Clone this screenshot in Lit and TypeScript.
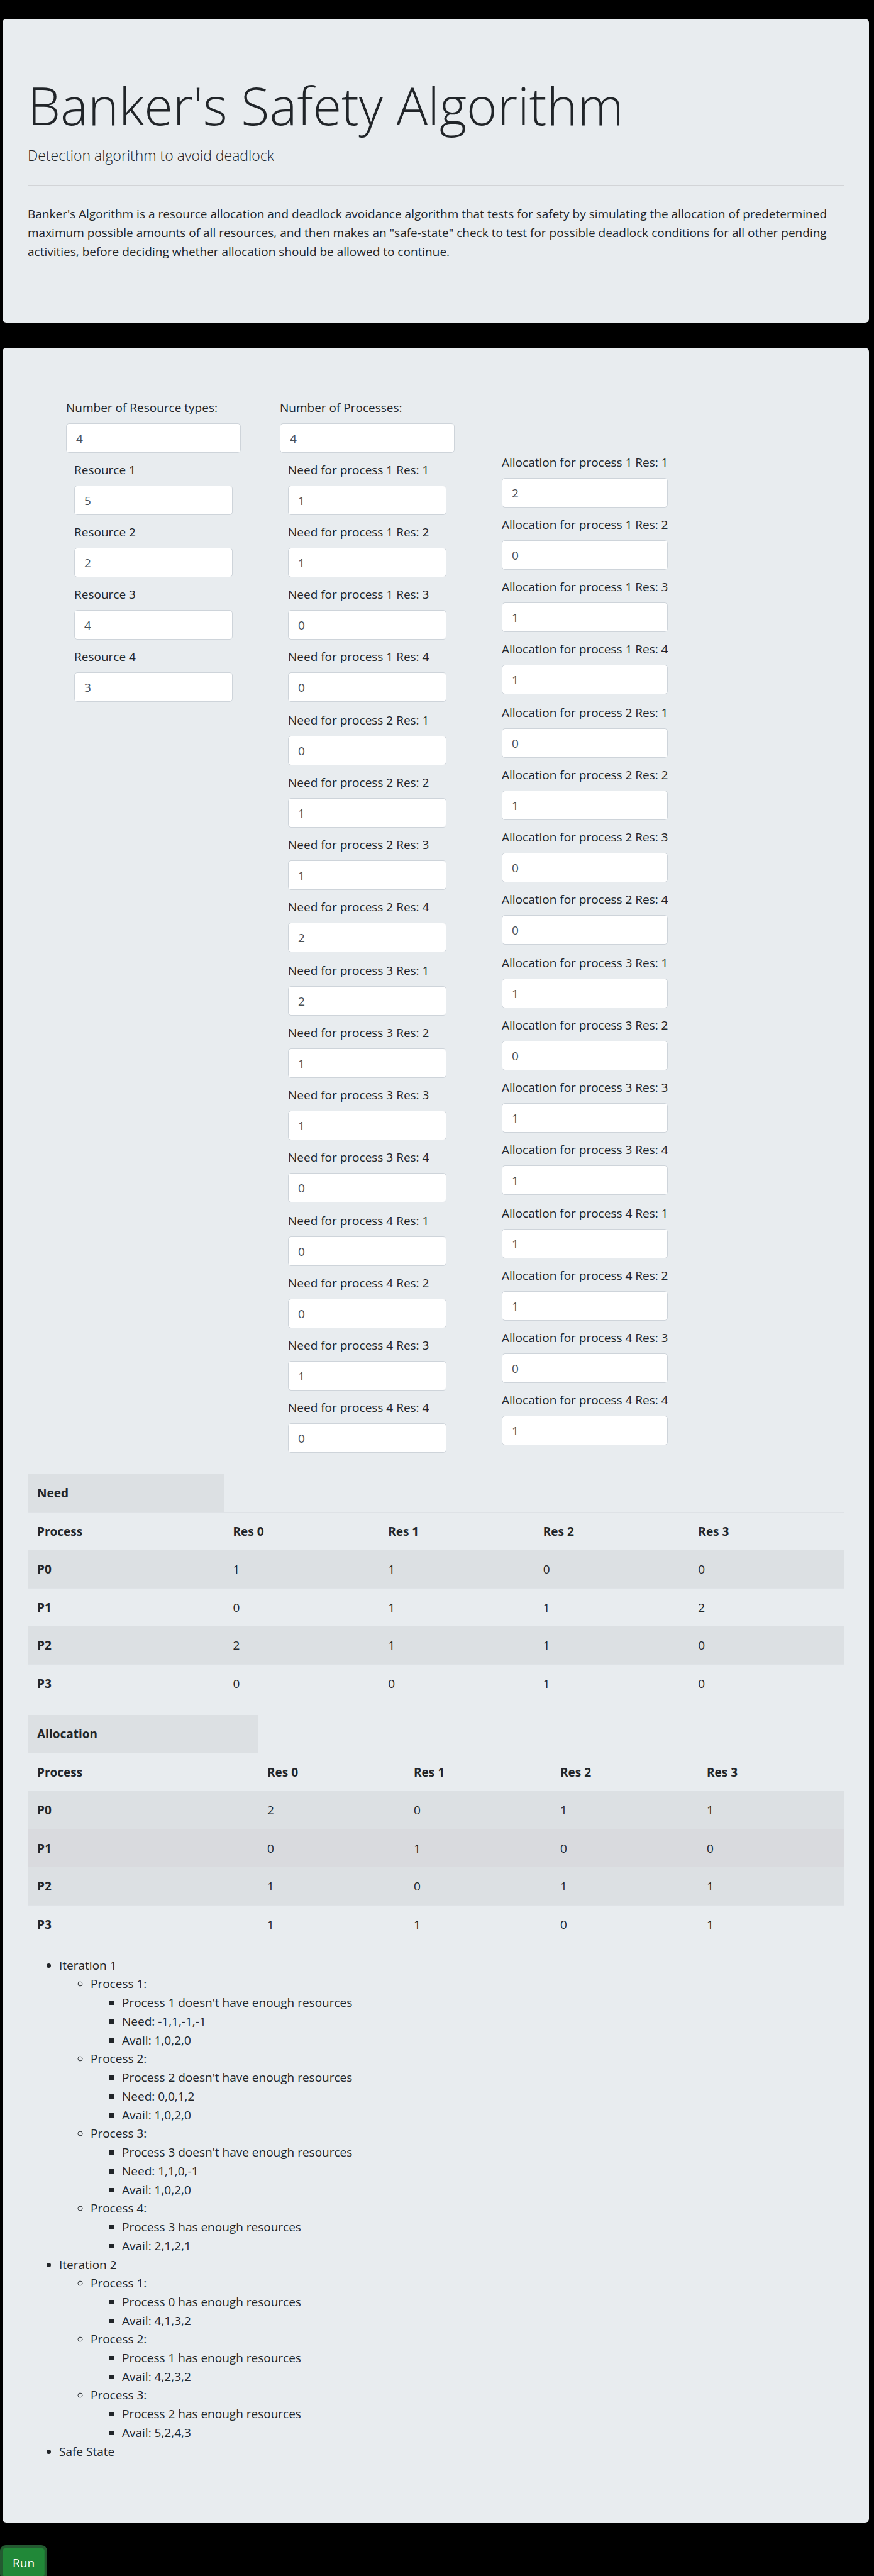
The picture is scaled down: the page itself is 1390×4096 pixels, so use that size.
import { LitElement, html, css } from "lit";
import { customElement, property, state } from "lit/decorators.js";

type Matrix = number[][];
interface Step {
  title: string;
  notes: string[];
}
interface Iteration {
  title: string;
  steps: Step[];
}

const log: Iteration[] = [
  {
    title: "Iteration 1",
    steps: [
      { title: "Process 1:", notes: ["Process 1 doesn't have enough resources", "Need: -1,1,-1,-1", "Avail: 1,0,2,0"] },
      { title: "Process 2:", notes: ["Process 2 doesn't have enough resources", "Need: 0,0,1,2", "Avail: 1,0,2,0"] },
      { title: "Process 3:", notes: ["Process 3 doesn't have enough resources", "Need: 1,1,0,-1", "Avail: 1,0,2,0"] },
      { title: "Process 4:", notes: ["Process 3 has enough resources", "Avail: 2,1,2,1"] },
    ],
  },
  {
    title: "Iteration 2",
    steps: [
      { title: "Process 1:", notes: ["Process 0 has enough resources", "Avail: 4,1,3,2"] },
      { title: "Process 2:", notes: ["Process 1 has enough resources", "Avail: 4,2,3,2"] },
      { title: "Process 3:", notes: ["Process 2 has enough resources", "Avail: 5,2,4,3"] },
    ],
  },
  { title: "Safe State", steps: [] },
];

@customElement("number-field")
export class NumberField extends LitElement {
  @property() label = "";
  @property({ type: Number }) value = 0;

  static styles = css`
    :host {
      display: block;
      margin-bottom: 12px;
    }
    .label {
      display: block;
      margin-bottom: 10px;
      line-height: 30px;
      white-space: nowrap;
    }
    .input {
      display: block;
      box-sizing: border-box;
      width: 100%;
      height: 47px;
      margin: 0;
      padding: 0 15px;
      border: 1px solid #ced4da;
      border-radius: 5px;
      background: #fff;
      color: #495057;
      font: inherit;
      appearance: textfield;
    }
  `;

  render() {
    return html`
      <label class="label" for="field">${this.label}</label>
      <input class="input" id="field" type="number" min="0" .value=${String(this.value)} />
    `;
  }
}

@customElement("matrix-table")
export class MatrixTable extends LitElement {
  @property() name = "";
  @property({ attribute: false }) rows: Matrix = [];
  @property({ type: Number }) active = -1;

  static styles = css`
    :host {
      display: block;
      margin-bottom: 20px;
    }
    .table {
      width: 100%;
      table-layout: fixed;
      border-collapse: separate;
      border-spacing: 0;
      line-height: 30px;
    }
    .first {
      width: 24%;
    }
    .first.wide {
      width: 28.2%;
    }
    .cell {
      padding: 15px;
      text-align: left;
      font-weight: 400;
    }
    .head {
      font-weight: 700;
    }
    .striped {
      background: #dce0e3;
      border-bottom: 1px solid #dee2e6;
    }
    .blank {
      padding: 0;
      border-bottom: 1px solid #dee2e6;
    }
    .active {
      background: #d9dade;
    }
  `;

  render() {
    const columns = this.rows[0] ?? [];
    return html`
      <table class="table">
        <colgroup>
          <col class="first ${this.name === "Allocation" ? "wide" : ""}" />
          ${columns.map(() => html`<col />`)}
        </colgroup>
        <thead>
          <tr>
            <th class="cell head striped">${this.name}</th>
            <td class="blank" colspan=${columns.length}></td>
          </tr>
          <tr>
            <th class="cell head" scope="col">Process</th>
            ${columns.map((_, c) => html`<th class="cell head" scope="col">Res ${c}</th>`)}
          </tr>
        </thead>
        <tbody>
          ${this.rows.map((row, r) => {
            const tone = r === this.active ? "active" : r % 2 === 0 ? "striped" : "";
            return html`<tr>
              <th class="cell head ${tone}" scope="row">P${r}</th>
              ${row.map((n) => html`<td class="cell ${tone}">${n}</td>`)}
            </tr>`;
          })}
        </tbody>
      </table>
    `;
  }
}

@customElement("app-root")
export class AppRoot extends LitElement {
  @state() resources = [5, 2, 4, 3];
  @state() requested: Matrix = [[1, 1, 0, 0], [0, 1, 1, 2], [2, 1, 1, 0], [0, 0, 1, 0]];
  @state() allocated: Matrix = [[2, 0, 1, 1], [0, 1, 0, 0], [1, 0, 1, 1], [1, 1, 0, 1]];

  static styles = css`
    :host {
      display: block;
      box-sizing: border-box;
      height: 100vh;
      overflow-y: auto;
      scrollbar-width: none;
      padding: 30px 8px 0 4px;
      background: #000;
      color: #212529;
      font-family: "Open Sans", "Noto Sans", sans-serif;
      font-size: 19px;
      line-height: 30px;
    }
    .panel {
      margin-bottom: 40px;
      padding: 80px 40px 78px;
      border-radius: 6px;
      background: #e8ecef;
    }
    .intro {
      padding-bottom: 98px;
    }
    .title {
      margin: 0 0 4px;
      font-size: 83px;
      font-weight: 300;
      line-height: 114px;
    }
    .lead {
      margin: 0 0 28px;
      font-size: 23px;
      font-weight: 300;
      line-height: 38px;
    }
    .rule {
      margin: 0 0 30px;
      border: 0;
      border-top: 1px solid #d2d4d7;
    }
    .text {
      margin: 0;
    }
    .form {
      display: flex;
      gap: 62px;
      margin-bottom: 20px;
      padding-left: 61px;
    }
    .column {
      flex: 0 1 278px;
    }
    .column.allocation {
      flex-basis: 288px;
      padding-top: 87px;
      box-sizing: border-box;
    }
    .group {
      padding: 0 13px 2px;
    }
    .list {
      margin: 0;
      padding-left: 50px;
    }
    .log {
      margin-bottom: 20px;
    }
    .step {
      line-height: 29px;
    }
    .note {
      line-height: 30px;
    }
    .run {
      display: block;
      height: 47px;
      padding: 0 15px;
      border: 1px solid #1e7e34;
      border-radius: 5px;
      background: #218838;
      box-shadow: 0 0 0 4px rgba(72, 180, 97, 0.5);
      color: #fff;
      font: inherit;
    }
  `;

  private fields(name: string, matrix: Matrix) {
    return matrix.map(
      (row, p) => html`<div class="group">
        ${row.map((n, r) => html`<number-field label="${name} for process ${p + 1} Res: ${r + 1}" .value=${n}></number-field>`)}
      </div>`
    );
  }

  render() {
    return html`
      <section class="panel intro">
        <h1 class="title">Banker's Safety Algorithm</h1>
        <p class="lead">Detection algorithm to avoid deadlock</p>
        <hr class="rule" />
        <p class="text">
          Banker's Algorithm is a resource allocation and deadlock avoidance algorithm that tests for safety by
          simulating the allocation of predetermined maximum possible amounts of all resources, and then makes an
          "safe-state" check to test for possible deadlock conditions for all other pending activities, before
          deciding whether allocation should be allowed to continue.
        </p>
      </section>
      <main class="panel">
        <form class="form">
          <div class="column">
            <number-field label="Number of Resource types:" .value=${this.resources.length}></number-field>
            <div class="group">
              ${this.resources.map((n, i) => html`<number-field label="Resource ${i + 1}" .value=${n}></number-field>`)}
            </div>
          </div>
          <div class="column">
            <number-field label="Number of Processes:" .value=${this.requested.length}></number-field>
            ${this.fields("Need", this.requested)}
          </div>
          <div class="column allocation">${this.fields("Allocation", this.allocated)}</div>
        </form>
        <matrix-table name="Need" .rows=${this.requested}></matrix-table>
        <matrix-table name="Allocation" .rows=${this.allocated} .active=${1}></matrix-table>
        <ul class="list log">
          ${log.map(
            (item) => html`<li>
              ${item.title}
              ${item.steps.length
                ? html`<ul class="list">
                    ${item.steps.map(
                      (step) => html`<li class="step">
                        ${step.title}
                        <ul class="list">
                          ${step.notes.map((note) => html`<li class="note">${note}</li>`)}
                        </ul>
                      </li>`
                    )}
                  </ul>`
                : ""}
            </li>`
          )}
        </ul>
      </main>
      <button class="run" type="button">Run</button>
    `;
  }
}
